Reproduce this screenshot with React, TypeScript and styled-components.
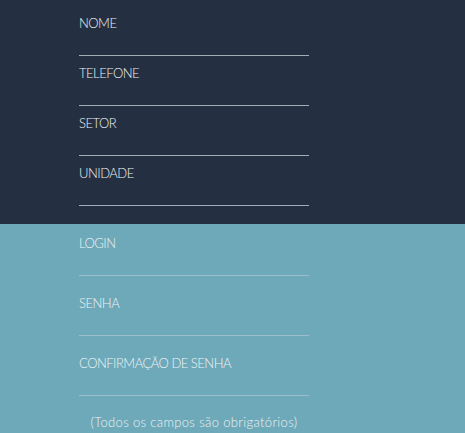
import React from 'react';
import styled, { createGlobalStyle } from 'styled-components';

const GlobalStyle = createGlobalStyle`
  html, body {
    margin: 0;
    padding: 0;
    background: #6da9b9;
  }
  body {
    font-family: "Lato", "Liberation Sans", sans-serif;
  }
  * {
    box-sizing: border-box;
  }
`;

const personalFields = ['NOME', 'TELEFONE', 'SETOR', 'UNIDADE'];
const accessFields = ['LOGIN', 'SENHA', 'CONFIRMAÇÃO DE SENHA'];

interface FieldProps {
  label: string;
  type?: string;
  tone: 'dark' | 'light';
}

function Field({ label, type = 'text', tone }: FieldProps) {
  return (
    <StyledField $tone={tone}>
      <label className="field__label">{label}</label>
      <input className="field__input" type={type} />
    </StyledField>
  );
}

function App() {
  return (
    <>
      <GlobalStyle />
      <Page>
        <Section $bg="#243041" $padTop={15} $padBottom={18}>
          <FieldList $gap={9}>
            {personalFields.map((f) => (
              <Field key={f} label={f} tone="dark" />
            ))}
          </FieldList>
        </Section>
        <Section $bg="#6da9b9" $padTop={11} $padBottom={0}>
          <FieldList $gap={19}>
            {accessFields.map((f) => (
              <Field key={f} label={f} tone="light" type={f === 'LOGIN' ? 'text' : 'password'} />
            ))}
          </FieldList>
          <Note>(Todos os campos são obrigatórios)</Note>
        </Section>
      </Page>
    </>
  );
}

const Page = styled.div`
  width: 100%;
  min-height: 433px;
  display: flex;
  flex-direction: column;
  background: #6da9b9;
`;

const Section = styled.section<{ $bg: string; $padTop: number; $padBottom: number }>`
  background: ${(p) => p.$bg};
  padding: ${(p) => p.$padTop}px 0 ${(p) => p.$padBottom}px 79px;
`;

const FieldList = styled.div<{ $gap: number }>`
  display: flex;
  flex-direction: column;
  gap: ${(p) => p.$gap}px;
`;

const StyledField = styled.div<{ $tone: 'dark' | 'light' }>`
  width: 230px;
  display: flex;
  flex-direction: column;

  .field__label {
    color: #eef3f5;
    font-size: 13px;
    font-weight: 300;
    line-height: 16px;
    height: 16px;
    letter-spacing: -0.5px;
  }
  .field__input {
    height: 25px;
    width: 100%;
    padding: 0;
    margin: 0;
    background: transparent;
    border: none;
    outline: none;
    color: #ffffff;
    border-bottom: 1px solid ${(p) => (p.$tone === 'dark' ? '#a3abb7' : '#9dbfcb')};
  }
`;

const Note = styled.p`
  width: 230px;
  margin: 18px 0 0;
  text-align: center;
  color: #eef3f5;
  font-size: 13px;
  font-weight: 300;
  line-height: 16px;
  letter-spacing: 0.35px;
`;

export default App;
